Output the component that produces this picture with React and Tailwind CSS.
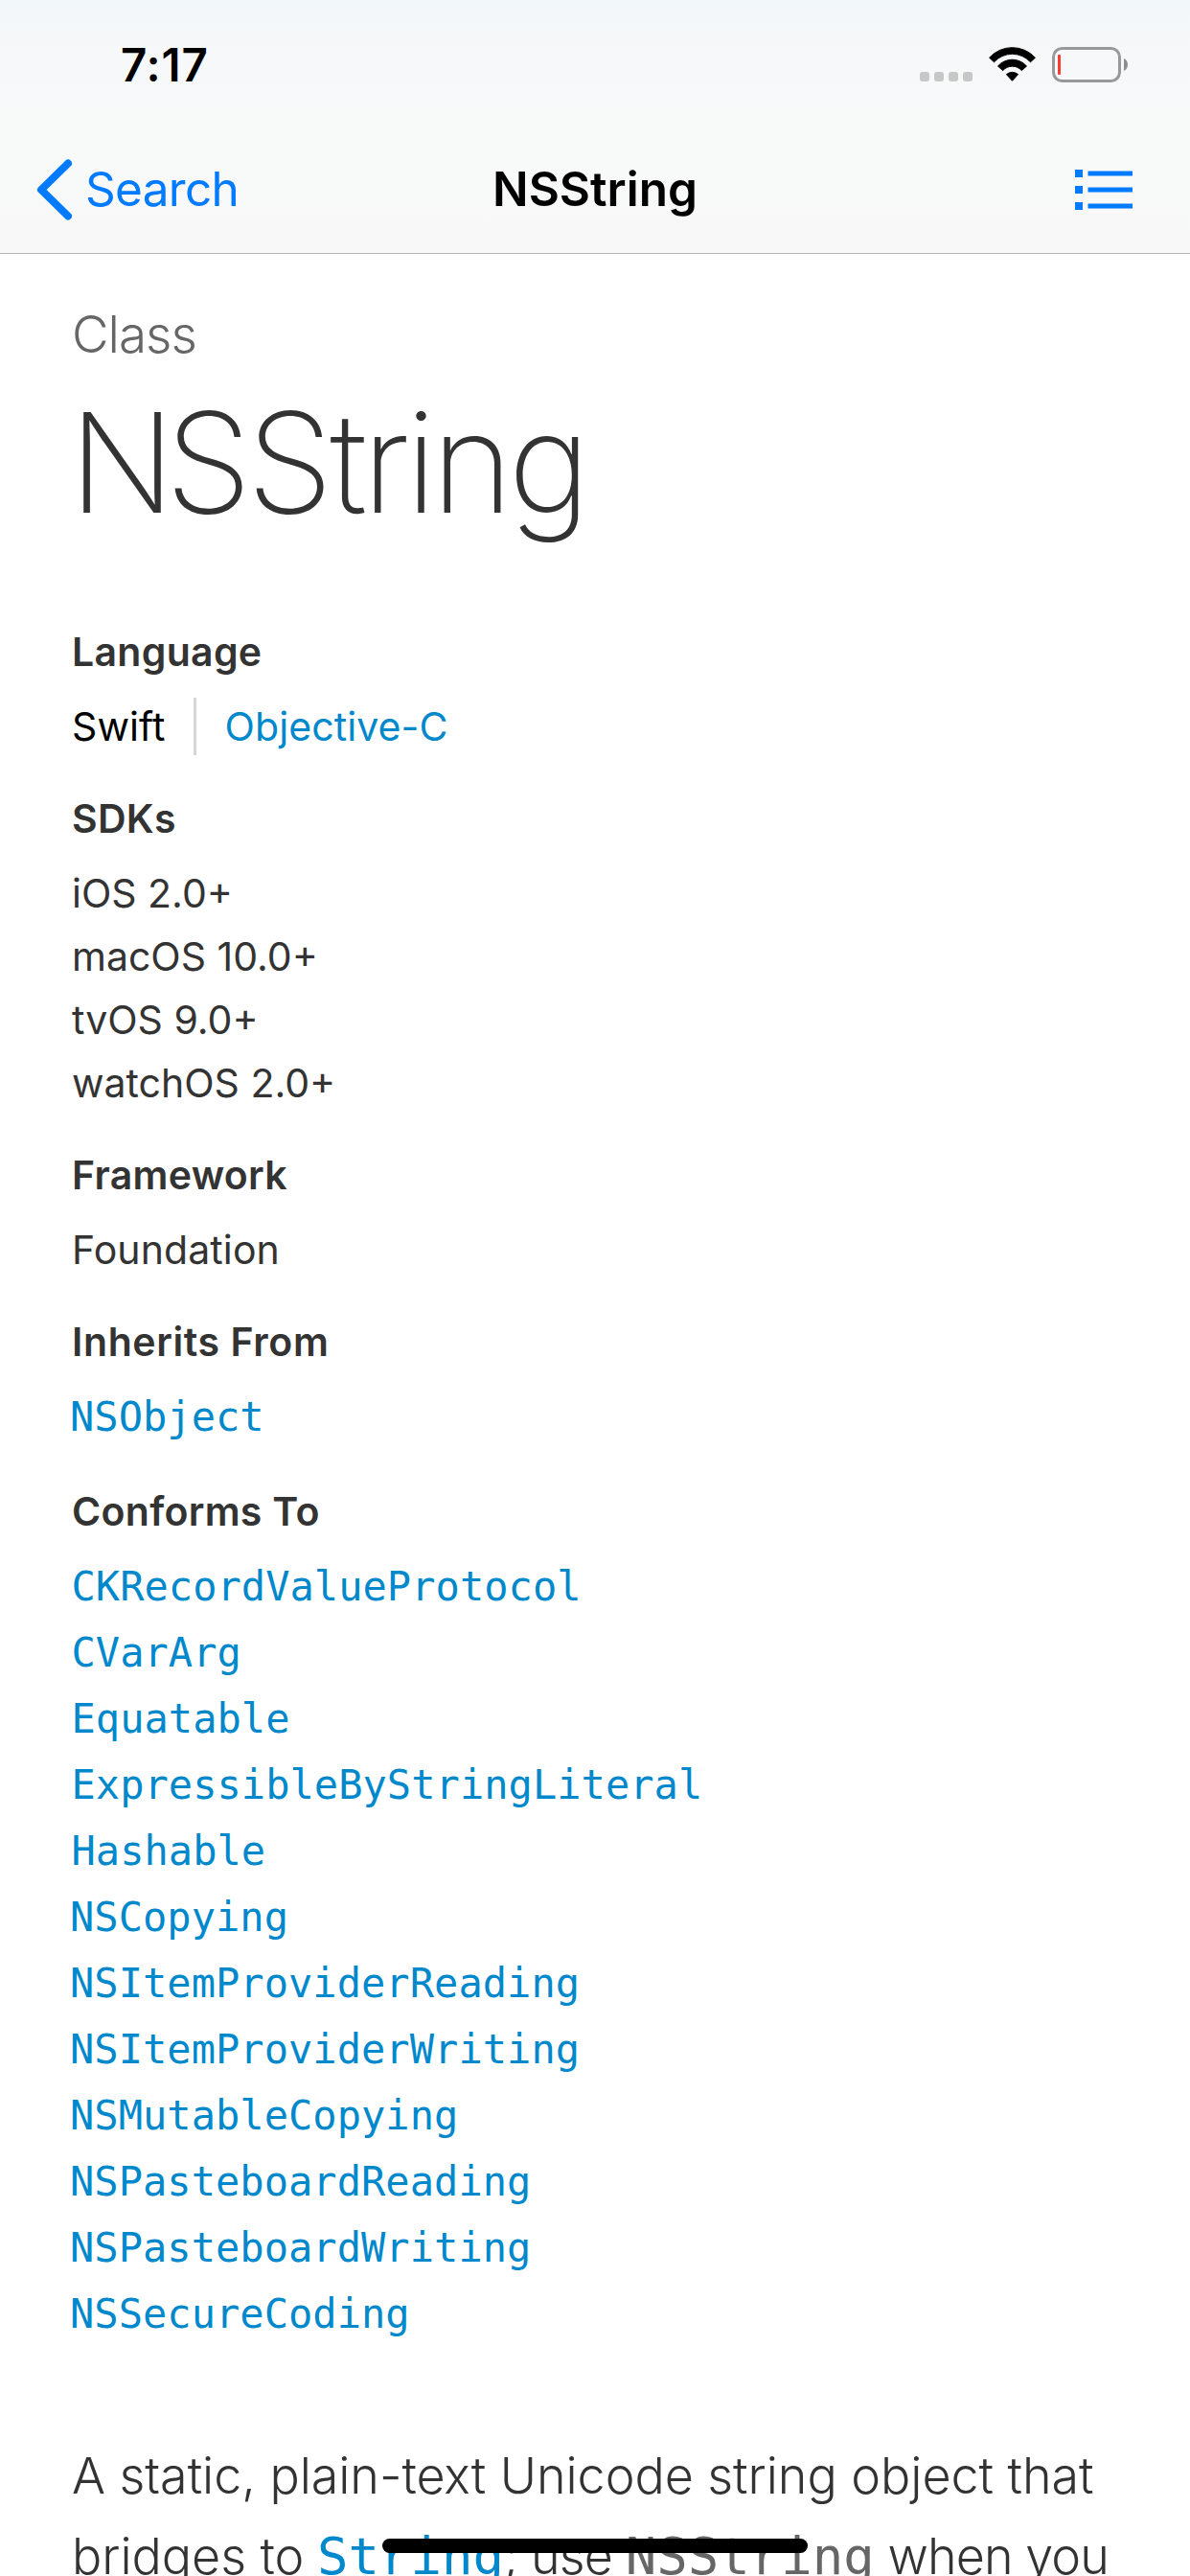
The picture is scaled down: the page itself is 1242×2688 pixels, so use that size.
const sdks = ['iOS 2.0+', 'macOS 10.0+', 'tvOS 9.0+', 'watchOS 2.0+'];

const protocols = [
  'CKRecordValueProtocol',
  'CVarArg',
  'Equatable',
  'ExpressibleByStringLiteral',
  'Hashable',
  'NSCopying',
  'NSItemProviderReading',
  'NSItemProviderWriting',
  'NSMutableCopying',
  'NSPasteboardReading',
  'NSPasteboardWriting',
  'NSSecureCoding',
];

function StatusIcons() {
  return (
    <svg width="218" height="38" viewBox="0 0 218 38" fill="none">
      <g fill="#c6c7c7">
        <rect x="0" y="26" width="10" height="10" rx="3" />
        <rect x="15" y="26" width="10" height="10" rx="3" />
        <rect x="30" y="26" width="10" height="10" rx="3" />
        <rect x="45" y="26" width="10" height="10" rx="3" />
      </g>
      <g fill="#000" stroke="#000" strokeWidth="1" strokeLinejoin="round">
        <path d="M72.600 11.200A32.300 32.300 0 0 1 120.400 11.200L115.500 15.800A25.500 25.500 0 0 0 77.500 15.800Z" />
        <path d="M81.500 20A20 20 0 0 1 111.500 20L106.300 24.600A13 13 0 0 0 86.700 24.600Z" />
        <path d="M90.400 28.600A9.500 9.500 0 0 1 102.600 28.600L96.500 35.300Z" />
      </g>
      <rect x="139.500" y="1.500" width="69" height="34" rx="9" stroke="#999" strokeWidth="3" />
      <rect x="144" y="8" width="3" height="21" rx="1" fill="#ff3b30" />
      <path d="M213 12C215.500 13 217 15.500 217 18.500C217 21.500 215.500 24 213 25Z" fill="#8e8e8e" />
    </svg>
  );
}

function BackChevron() {
  return (
    <svg width="38" height="64" viewBox="0 0 38 64" fill="none">
      <path d="M34 4.500L6 32L34 59.500" stroke="#007aff" strokeWidth="8" strokeLinecap="round" strokeLinejoin="round" />
    </svg>
  );
}

function ListIcon() {
  return (
    <svg width="60" height="42" viewBox="0 0 60 42" fill="#007aff">
      {[0, 17, 34].map((y) => (
        <g key={y}>
          <rect x="0" y={y} width="8" height="8" />
          <rect x="13.500" y={y + 1.5} width="46.500" height="5" />
        </g>
      ))}
    </svg>
  );
}

function Header() {
  return (
    <header className="h-[265px] border-b border-[#b0b1b1] bg-[linear-gradient(to_bottom,#f2f7f9_0px,#f7f8f9_60px,#f8f9f9_140px,#f8f8f8_264px)]">
      <div className="flex h-[136px] items-center justify-between pr-[64px] pl-[126px]">
        <span className="text-[47.5px] leading-none font-semibold tracking-[0.8px] text-black">7:17</span>
        <StatusIcons />
      </div>
      <nav className="grid h-[124px] grid-cols-[1fr_auto_1fr] items-center px-[37px]">
        <a className="flex items-center gap-[14px] text-[#007aff]">
          <BackChevron />
          <span className="text-[49.5px] leading-none tracking-[-0.7px]">Search</span>
        </a>
        <h1 className="text-[49.5px] leading-none font-semibold tracking-[0px] text-black">NSString</h1>
        <span className="mr-[23px] justify-self-end">
          <ListIcon />
        </span>
      </nav>
    </header>
  );
}

function Label({ children }) {
  return <h3 className="font-semibold tracking-[0.3px]">{children}</h3>;
}

export default function App() {
  return (
    <div className="relative h-[2688px] w-[1242px] overflow-hidden bg-white font-['Inter',sans-serif] text-[#333]">
      <Header />
      <main className="pt-[51px] pl-[75px] text-[41px] leading-[66px] whitespace-nowrap">
        <p className="text-[53px] font-light tracking-[-1px] text-[#666]">Class</p>
        <h2 className="mt-[21px] -ml-[3px] text-[145px] leading-[160px] font-extralight tracking-[-5.2px]">
          <span className="tracking-[-10.5px]">N</span>S<span className="tracking-[-3.5px]">S</span>tring
        </h2>

        <section className="mt-[84px]">
          <Label>Language</Label>
          <div className="mt-[12px] flex items-center">
            <span className="tracking-[0.1px] text-black">Swift</span>
            <span className="ml-[30px] h-[60px] w-[3px] bg-[#d6d6d6]" />
            <a className="ml-[29px] tracking-[0.1px] text-[#0088cc]">Objective-C</a>
          </div>
        </section>

        <section className="mt-[30px]">
          <Label>SDKs</Label>
          <ul className="mt-[12px]">
            {sdks.map((s) => (
              <li key={s}>{s}</li>
            ))}
          </ul>
        </section>

        <section className="mt-[30px]">
          <Label>Framework</Label>
          <p className="mt-[12px] tracking-[0.1px]">Foundation</p>
        </section>

        <section className="mt-[30px]">
          <h3 className="font-semibold tracking-[0.6px]">Inherits From</h3>
          <p className="mt-[11px] -ml-[2px] font-['DejaVu_Sans_Mono',monospace] text-[42px] leading-[69px] tracking-[0.05px] text-[#0088cc]">
            <a>NSObject</a>
          </p>
        </section>

        <section className="mt-[31px]">
          <Label>Conforms To</Label>
          <ul className="mt-[11px] font-['DejaVu_Sans_Mono',monospace] text-[42px] leading-[69px] tracking-[0.05px] text-[#0088cc]">
            {protocols.map((p) => (
              <li key={p} className={p.startsWith('NS') ? '-ml-[2px]' : '-ml-[0.5px]'}>
                {p}
              </li>
            ))}
          </ul>
        </section>

        <p className="mt-[93px] text-[52px] leading-[84px] font-light tracking-[-0.05px]">
          A static, plain-text Unicode string object that
          <br />
          bridges to{' '}
          <span className="tracking-[-0.9px]">
            <a className="-ml-[1px] font-['DejaVu_Sans_Mono',monospace] text-[54px] leading-none tracking-normal text-[#0088cc]">String</a>; use{' '}
            <code className="font-['DejaVu_Sans_Mono',monospace] text-[54px] leading-none tracking-normal text-[#666]">NSString</code> when you
          </span>
        </p>
      </main>
      <div className="absolute top-[2649px] left-[399px] h-[15px] w-[444px] rounded-full bg-black" />
    </div>
  );
}
